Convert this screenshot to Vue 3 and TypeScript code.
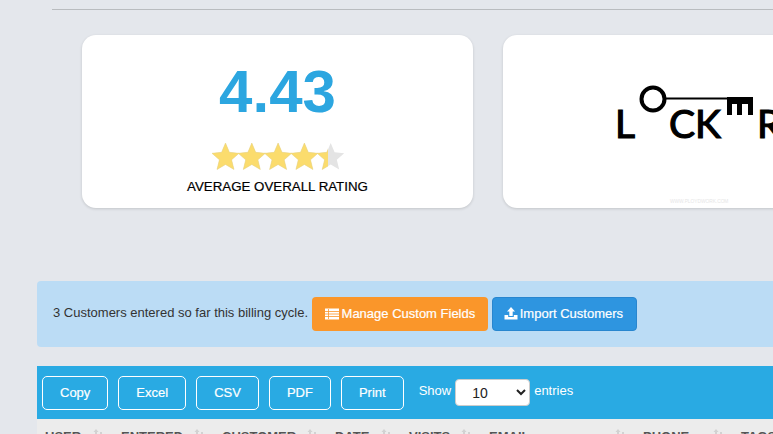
<script setup lang="ts">
const exportButtons = ['Copy', 'Excel', 'CSV', 'PDF', 'Print']
const columns = [
  { name: 'USER', width: 76 },
  { name: 'ENTERED', width: 101 },
  { name: 'CUSTOMER', width: 113 },
  { name: 'DATE', width: 74 },
  { name: 'VISITS', width: 80 },
  { name: 'EMAIL', width: 154 },
  { name: 'PHONE', width: 98 },
  { name: 'TAGS', width: 80 },
]
const starPoints = '13.5,0 17.4,9.3 27,10.300 19.600,16.800 22,26.500 13.5,21.500 5,26.500 7.400,16.800 0,10.300 9.600,9.300'
const stars = [0, 1, 2, 3, 4]
</script>

<template>
  <div class="page">
    <div class="rule"></div>

    <div class="cards">
      <div class="card rating-card">
        <div class="score">4.43</div>
        <svg class="stars" width="133" height="27" viewBox="0 0 133 27">
          <defs>
            <clipPath id="filled"><rect x="0" y="0" width="116" height="27" /></clipPath>
          </defs>
          <polygon v-for="i in stars" :key="'e' + i" :points="starPoints" :transform="`translate(${i * 26.3} 0)`" fill="#e4e4e4" />
          <g clip-path="url(#filled)">
            <polygon v-for="i in stars" :key="'f' + i" :points="starPoints" :transform="`translate(${i * 26.3} 0)`" fill="#fbdc6d" stroke="#e8d27c" stroke-width="0.5" />
          </g>
        </svg>
        <div class="rating-label">AVERAGE OVERALL RATING</div>
      </div>

      <div class="card logo-card">
        <svg class="logo" width="270" height="173" viewBox="0 0 270 173">
          <text x="112" y="103" class="logo-text">L</text>
          <circle cx="150" cy="64" r="11.500" fill="none" stroke="#000" stroke-width="4" />
          <path d="M162 63.500H224" stroke="#000" stroke-width="2" />
          <path d="M224 62H250V80H245V69H239V80H234V69H229V80H224Z" fill="#000" />
          <text x="166" y="103" class="logo-text">CK</text>
          <text x="254" y="103" class="logo-text">R</text>
          <text x="167" y="168" class="logo-small">WWW.PLOYDWORK.COM</text>
        </svg>
      </div>
    </div>

    <div class="notice">
      <span class="notice-text">3 Customers entered so far this billing cycle.</span>
      <button class="action orange">
        <svg width="14" height="12" viewBox="0 0 14 12"><path d="M0 0.500H14V11.500H0Z" fill="#fff" /><path d="M0 3.500H14M0 6H14M0 8.500H14M3.500 1V11" stroke="#fa962a" stroke-width="0.8" /></svg>
        Manage Custom Fields
      </button>
      <button class="action blue">
        <svg width="14" height="13" viewBox="0 0 14 13"><path d="M7 0L11 4.500H8.700V9H5.300V4.500H3Z" fill="#fff" /><path d="M0.500 8H4.200V10H9.800V8H13.500V12.500H0.500Z" fill="#fff" /></svg>
        Import Customers
      </button>
    </div>

    <div class="table-box">
      <div class="toolbar">
        <button v-for="label in exportButtons" :key="label" class="export">{{ label }}</button>
        <label class="length">
          <span class="length-text">Show</span>
          <select class="length-select">
            <option>10</option>
          </select>
          <span class="length-text">entries</span>
        </label>
      </div>
      <div class="thead">
        <div v-for="col in columns" :key="col.name" class="th" :style="{ width: col.width + 'px' }">
          <span>{{ col.name }}</span>
          <svg class="sort" width="11" height="12" viewBox="0 0 11 12"><path d="M3 0L5.500 3H4V9H2V3H0.500Z M8 12L5.500 9H7V3H9V9H10.500Z" fill="#d2d2d2" /></svg>
        </div>
      </div>
    </div>
  </div>
</template>

<style scoped>
.page {
  width: 773px;
  height: 434px;
  overflow: hidden;
  background: #e4e7ec;
  font-family: "Liberation Sans", Arial, sans-serif;
  padding-top: 9px;
  box-sizing: border-box;
}

.rule {
  margin-left: 52px;
  height: 1px;
  background: #b9bcbf;
}

.cards {
  display: flex;
  gap: 30px;
  margin: 25px 0 0 82px;
  width: 800px;
}

.card {
  flex: none;
  height: 173px;
  background: #fff;
  border-radius: 14px;
  box-shadow: 0 1px 3px rgba(0, 0, 0, 0.15);
}

.rating-card {
  width: 391px;
  display: flex;
  flex-direction: column;
  align-items: center;
}

.logo-card {
  width: 300px;
  overflow: hidden;
}

.logo {
  display: block;
}

.logo-text {
  font-family: Lato, "Liberation Sans", sans-serif;
  font-size: 39px;
  font-weight: 400;
  fill: #000;
  stroke: #000;
  stroke-width: 1.2px;
}

.logo-small {
  font-size: 4.800px;
  fill: #e6e6e6;
}

.score {
  margin-top: 22px;
  font-size: 60px;
  line-height: 69px;
  font-weight: 700;
  color: #2ca6e0;
}

.stars {
  display: block;
  margin: 17px 0 0 2px;
}

.rating-label {
  margin-top: 9px;
  font-size: 13.300px;
  line-height: 16px;
  color: #000;
  -webkit-text-stroke: 0.2px #000;
}

.notice {
  display: flex;
  align-items: center;
  gap: 4px;
  margin: 73px 0 0 37px;
  height: 66px;
  padding-left: 16px;
  background: #bbdcf5;
  border-radius: 4px 0 0 4px;
  font-size: 13px;
  color: #333;
}

.notice-text {
  padding-bottom: 4px;
}

.action {
  display: inline-flex;
  align-items: center;
  gap: 3px;
  height: 34px;
  padding: 0 11.500px 1px;
  border: 1px solid transparent;
  border-radius: 4px;
  color: #fff;
  font: 13px "Liberation Sans", Arial, sans-serif;
  -webkit-text-stroke: 0.2px #fff;
}

.orange {
  background: #fa962a;
}

.blue {
  gap: 2px;
  padding: 0 13px 1px 11px;
  background: #2e95e0;
  border-color: #2886cf;
}

.table-box {
  margin: 19px 0 0 37px;
}

.toolbar {
  display: flex;
  align-items: center;
  gap: 10px;
  height: 53px;
  padding-left: 5px;
  background: #29aae3;
}

.export {
  height: 34px;
  padding: 0 17px;
  background: transparent;
  border: 1px solid #fff;
  border-radius: 5px;
  color: #fff;
  font: 13px "Liberation Sans", Arial, sans-serif;
  -webkit-text-stroke: 0.2px #fff;
}

.length {
  display: flex;
  align-items: center;
  gap: 4px;
  margin-left: 5px;
  font-size: 13px;
  color: #fff;
}

.length-text {
  padding-bottom: 4px;
}

.length-select {
  width: 75px;
  height: 27px;
  padding-left: 12px;
  background: #fff;
  border: 1px solid #ccc;
  border-radius: 4px;
  color: #222;
  font: 14px "Liberation Sans", Arial, sans-serif;
}

.thead {
  display: flex;
  height: 30px;
  padding-top: 10px;
  box-sizing: border-box;
  background: #ececec;
  white-space: nowrap;
}

.th {
  flex: none;
  display: flex;
  justify-content: space-between;
  padding: 0 9px 0 8px;
  box-sizing: border-box;
  font-size: 13px;
  font-weight: 700;
  color: #555;
}

.sort {
  flex: none;
}
</style>
